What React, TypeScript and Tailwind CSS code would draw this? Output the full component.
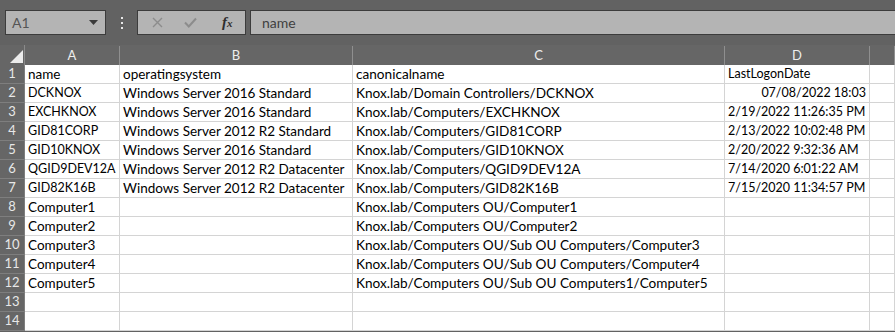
import React from "react";

type Row = { a?: string; b?: string; c?: string; d?: string; dRight?: boolean };

const rows: Row[] = [
  { a: "name", b: "operatingsystem", c: "canonicalname", d: "LastLogonDate" },
  { a: "DCKNOX", b: "Windows Server 2016 Standard", c: "Knox.lab/Domain Controllers/DCKNOX", d: "07/08/2022 18:03", dRight: true },
  { a: "EXCHKNOX", b: "Windows Server 2016 Standard", c: "Knox.lab/Computers/EXCHKNOX", d: "2/19/2022 11:26:35 PM" },
  { a: "GID81CORP", b: "Windows Server 2012 R2 Standard", c: "Knox.lab/Computers/GID81CORP", d: "2/13/2022 10:02:48 PM" },
  { a: "GID10KNOX", b: "Windows Server 2016 Standard", c: "Knox.lab/Computers/GID10KNOX", d: "2/20/2022 9:32:36 AM" },
  { a: "QGID9DEV12A", b: "Windows Server 2012 R2 Datacenter", c: "Knox.lab/Computers/QGID9DEV12A", d: "7/14/2020 6:01:22 AM" },
  { a: "GID82K16B", b: "Windows Server 2012 R2 Datacenter", c: "Knox.lab/Computers/GID82K16B", d: "7/15/2020 11:34:57 PM" },
  { a: "Computer1", c: "Knox.lab/Computers OU/Computer1" },
  { a: "Computer2", c: "Knox.lab/Computers OU/Computer2" },
  { a: "Computer3", c: "Knox.lab/Computers OU/Sub OU Computers/Computer3" },
  { a: "Computer4", c: "Knox.lab/Computers OU/Sub OU Computers/Computer4" },
  { a: "Computer5", c: "Knox.lab/Computers OU/Sub OU Computers1/Computer5" },
  {},
  {},
];

const GRID = "grid grid-cols-[25px_95px_233px_372px_145px_1fr]";

// Lato runs a little off Calibri's widths, so sizes differ per column
function Cell({ text, right, size = "text-[13px]" }: { text?: string; right?: boolean; size?: string }) {
  return (
    <div
      className={`flex h-[19px] items-end overflow-hidden whitespace-nowrap border-b border-r border-[#d4d4d4] bg-white px-[3px] pb-[1px] leading-[16px] text-black ${size} ${
        right ? "justify-end" : ""
      }`}
    >
      {text}
    </div>
  );
}

function FormulaBar() {
  return (
    <div className="flex h-[45px] items-start bg-[#626262] pt-[10px]">
      {/* name box */}
      <div className="ml-[5px] flex h-[25px] w-[101px] items-center justify-between border border-[#3c3c3c] bg-[#b4b4b4] pl-[6px] pr-[7px]">
        <span className="text-[14px] text-[#555]">A1</span>
        <svg width="9" height="5" viewBox="0 0 9 5">
          <polygon points="0,0 9,0 4.5,5" fill="#3a3a3a" />
        </svg>
      </div>

      {/* splitter dots */}
      <div className="flex w-[31px] flex-col items-center gap-[3px] pt-[7px]">
        <span className="h-[2px] w-[2px] bg-[#e8e8e8]" />
        <span className="h-[2px] w-[2px] bg-[#e8e8e8]" />
        <span className="h-[2px] w-[2px] bg-[#e8e8e8]" />
      </div>

      {/* cancel / enter / fx */}
      <div className="flex h-[25px] w-[109px] items-center border border-[#3c3c3c] bg-[#b4b4b4]">
        <svg className="ml-[14px]" width="11" height="11" viewBox="0 0 11 11">
          <path d="M1 1L10 10M10 1L1 10" stroke="#8c8c8c" strokeWidth="1.4" />
        </svg>
        <svg className="ml-[21px]" width="13" height="11" viewBox="0 0 13 11">
          <path d="M1 5.5L4.8 9.5L12 1.5" stroke="#8c8c8c" strokeWidth="2" fill="none" />
        </svg>
        <span className="ml-[25px] font-['Liberation_Serif',serif] text-[15px] font-bold italic leading-none text-[#2e2e2e]">
          f<span className="text-[11px]">x</span>
        </span>
      </div>

      {/* formula input */}
      <div className="ml-[4px] flex h-[25px] flex-1 items-center border-y border-l border-[#3c3c3c] bg-[#b4b4b4] pl-[11px]">
        <span className="text-[14px] text-[#3f3f3f]">name</span>
      </div>
    </div>
  );
}

function ColumnHeaders() {
  const cols = ["A", "B", "C", "D", ""];
  return (
    <div className={`${GRID} h-[20px] bg-[#666666]`}>
      <div className="relative border-r border-[#8a8a8a]">
        <svg className="absolute left-0 top-0" width="25" height="20" viewBox="0 0 25 20">
          <polygon points="10,18 23,5 23,18" fill="#ececec" />
        </svg>
      </div>
      {cols.map((c, i) => (
        <div
          key={i}
          className="mt-[1px] flex items-center justify-center border-r border-[#8f8f8f] text-[13px] text-[#ededed]"
        >
          {c}
        </div>
      ))}
    </div>
  );
}

export default function App() {
  return (
    <div className="h-[332px] w-[895px] overflow-hidden bg-[#626262] font-['Lato','Liberation_Sans',sans-serif]">
      <FormulaBar />
      <ColumnHeaders />
      {rows.map((r, i) => (
        <div key={i} className={GRID}>
          <div className="flex h-[19px] items-center justify-center border-b border-r border-[#7e7e7e] bg-[#666666] text-[13px] text-[#e8e8e8]">
            {i + 1}
          </div>
          <Cell text={r.a} size={i === 0 || i > 6 ? "text-[13.5px]" : "text-[12.5px]"} />
          <Cell text={r.b} size="text-[13.5px]" />
          <Cell text={r.c} size="text-[13.6px]" />
          <Cell text={r.d} right={r.dRight} size="text-[12.5px]" />
          <Cell />
        </div>
      ))}
    </div>
  );
}
